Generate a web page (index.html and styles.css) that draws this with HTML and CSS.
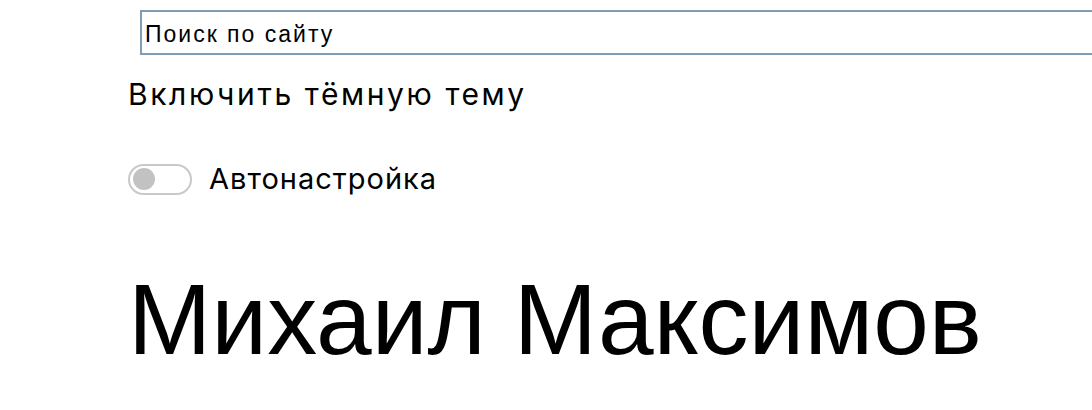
FILE: index.html
```html
<!DOCTYPE html>
<html lang="ru">
<head>
<meta charset="utf-8">
<title>Михаил Максимов</title>
<link rel="stylesheet" href="styles.css">
</head>
<body>
<div class="page">
  <form class="search">
    <input class="search-input" type="text" value="Поиск по сайту" aria-label="Поиск по сайту">
  </form>
  <div class="theme">
    <p class="theme-title">Включить тёмную тему</p>
    <label class="toggle">
      <span class="switch"><span class="knob"></span></span>
      <span class="toggle-text">Автонастройка</span>
    </label>
  </div>
  <h1 class="name">Михаил Максимов</h1>
</div>
</body>
</html>
```
FILE: styles.css
```css
html, body {
  margin: 0;
  padding: 0;
  overflow: hidden;
  background: #fff;
}
body {
  font-family: Inter, "Liberation Sans", Arial, sans-serif;
  color: #000;
}
.page {
  padding-left: 128px;
}
.search {
  padding-top: 10px;
  padding-left: 12px;
}
.search-input {
  display: block;
  box-sizing: border-box;
  width: 1000px;
  height: 45px;
  margin: 0;
  padding: 3px 3px 0;
  border: 2px solid #7f9db5;
  border-radius: 0;
  font-family: "Liberation Sans", Arial, sans-serif;
  font-size: 23px;
  letter-spacing: 2px;
  color: #000;
  background: #fff;
  outline: none;
}
.theme-title {
  margin: 21px 0 0;
  font-size: 30px;
  line-height: 36px;
  letter-spacing: 2.6px;
}
.toggle {
  display: flex;
  align-items: center;
  gap: 17px;
  margin-top: 49px;
}
.switch {
  display: flex;
  align-items: center;
  box-sizing: border-box;
  width: 64px;
  height: 31px;
  padding: 0 3px;
  border: 2px solid #c9c9c9;
  border-radius: 16px;
}
.knob {
  width: 22px;
  height: 22px;
  border-radius: 50%;
  background: #c2c2c2;
}
.toggle-text {
  font-size: 29px;
  line-height: 36px;
  letter-spacing: 1px;
}
.name {
  margin: 62px 0 0;
  font-family: "Liberation Sans", Arial, sans-serif;
  font-size: 100px;
  font-weight: 400;
  line-height: 120px;
}
```
